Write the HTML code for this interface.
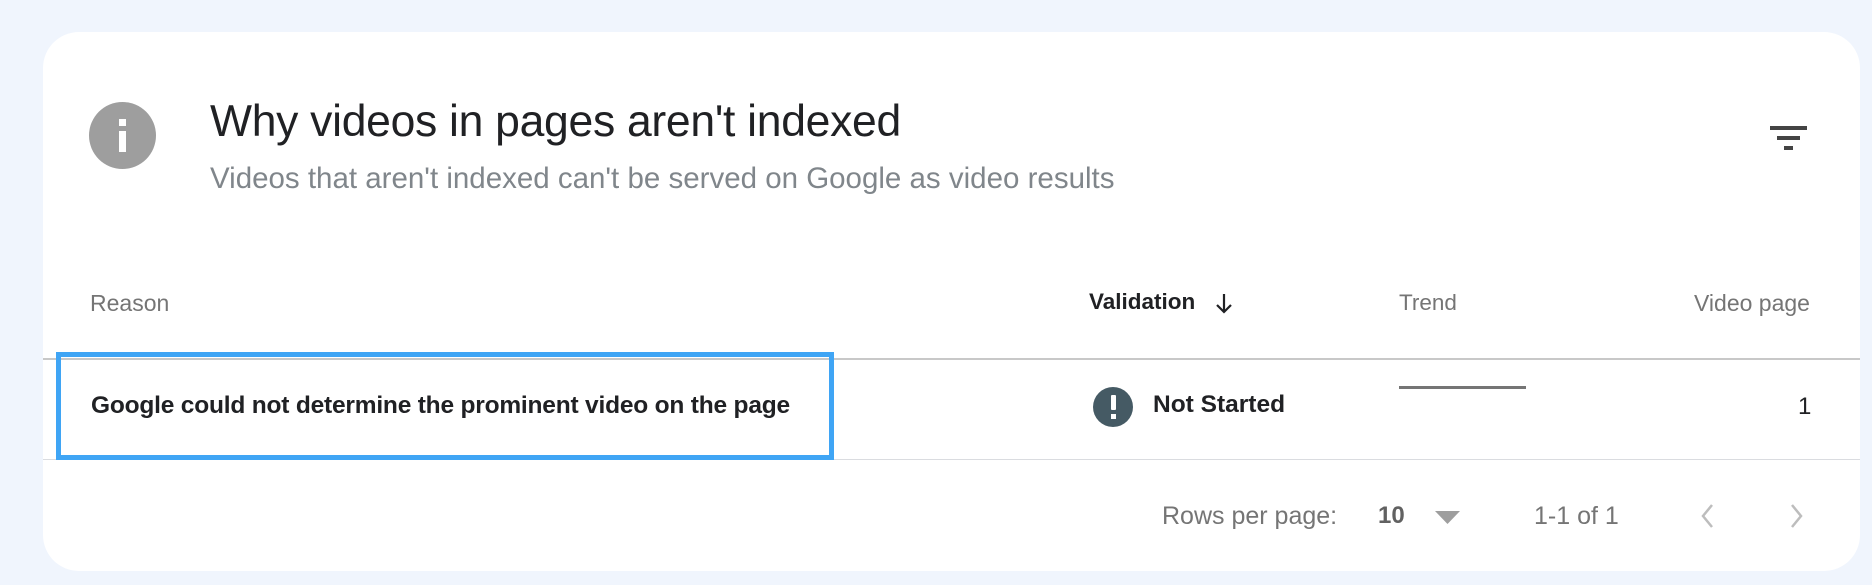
<!DOCTYPE html>
<html><head><meta charset="utf-8"><style>
body{margin:0;width:1872px;height:585px;background:#f0f5fd;font-family:"Liberation Sans",Arial,sans-serif;position:relative;overflow:hidden}
.card{position:absolute;left:43px;top:32px;width:1817px;height:539px;background:#fff;border-radius:36px}
.a{position:absolute;white-space:nowrap;line-height:1}
</style></head><body>
<div class="card"></div>
<div class="a" style="left:89px;top:102px;width:67px;height:67px;border-radius:50%;background:#9e9e9e"></div>
<div class="a" style="left:119px;top:119px;width:7px;height:7px;background:#fff"></div>
<div class="a" style="left:119px;top:131px;width:7px;height:21px;background:#fff"></div>
<div class="a" style="left:210px;top:100px;font-size:44.5px;color:#202124;letter-spacing:-0.3px">Why videos in pages aren't indexed</div>
<div class="a" style="left:210px;top:164px;font-size:29.5px;color:#80868b;letter-spacing:0px">Videos that aren't indexed can't be served on Google as video results</div>
<svg class="a" style="left:1770px;top:126px" width="38" height="27"><rect x="0" y="0" width="37" height="4" fill="#444"/><rect x="7" y="10" width="23" height="4" fill="#444"/><rect x="14" y="20" width="9" height="4" fill="#444"/></svg>
<div class="a" style="left:90px;top:292px;font-size:23px;color:#757575">Reason</div>
<div class="a" style="left:1089px;top:291px;font-size:22.5px;color:#202124;font-weight:bold">Validation</div>
<svg class="a" style="left:1214px;top:292px" width="20" height="24"><path d="M10 2V20M3 13L10 20L17 13" stroke="#202124" stroke-width="2.2" fill="none"/></svg>
<div class="a" style="left:1399px;top:292px;font-size:22.5px;color:#757575">Trend</div>
<div class="a" style="left:1694px;top:292px;font-size:23px;color:#757575">Video page</div>
<div class="a" style="left:43px;top:358px;width:1817px;height:2px;background:#c8c8c8"></div>
<div class="a" style="left:43px;top:459px;width:1817px;height:1px;background:#dadce0"></div>
<div class="a" style="left:56px;top:352px;width:768px;height:98px;border:5px solid #3fa5f5"></div>
<div class="a" style="left:91px;top:394px;font-size:24.5px;color:#202124;font-weight:bold;letter-spacing:-0.2px">Google could not determine the prominent video on the page</div>
<div class="a" style="left:1093px;top:387px;width:40px;height:40px;border-radius:50%;background:#455a64"></div>
<div class="a" style="left:1111px;top:395px;width:5px;height:15px;background:#fff;border-radius:1px"></div>
<div class="a" style="left:1111px;top:414px;width:5px;height:5px;background:#fff"></div>
<div class="a" style="left:1153px;top:393px;font-size:24.5px;color:#202124;font-weight:bold">Not Started</div>
<div class="a" style="left:1399px;top:386px;width:127px;height:3px;background:#757575"></div>
<div class="a" style="left:1798px;top:395px;font-size:24px;color:#202124">1</div>
<div class="a" style="left:1162px;top:504px;font-size:25px;color:#757575">Rows per page:</div>
<div class="a" style="left:1378px;top:504px;font-size:24px;color:#616161;font-weight:bold">10</div>
<svg class="a" style="left:1435px;top:511px" width="26" height="14"><path d="M0 0H25L12.5 13Z" fill="#9e9e9e"/></svg>
<div class="a" style="left:1534px;top:504px;font-size:25px;color:#757575">1-1 of 1</div>
<svg class="a" style="left:1700px;top:503px" width="16" height="26"><path d="M12 2L3 13L12 24" stroke="#bdbdbd" stroke-width="2.5" fill="none"/></svg>
<svg class="a" style="left:1788px;top:503px" width="16" height="26"><path d="M4 2L13 13L4 24" stroke="#bdbdbd" stroke-width="2.5" fill="none"/></svg>
</body></html>
